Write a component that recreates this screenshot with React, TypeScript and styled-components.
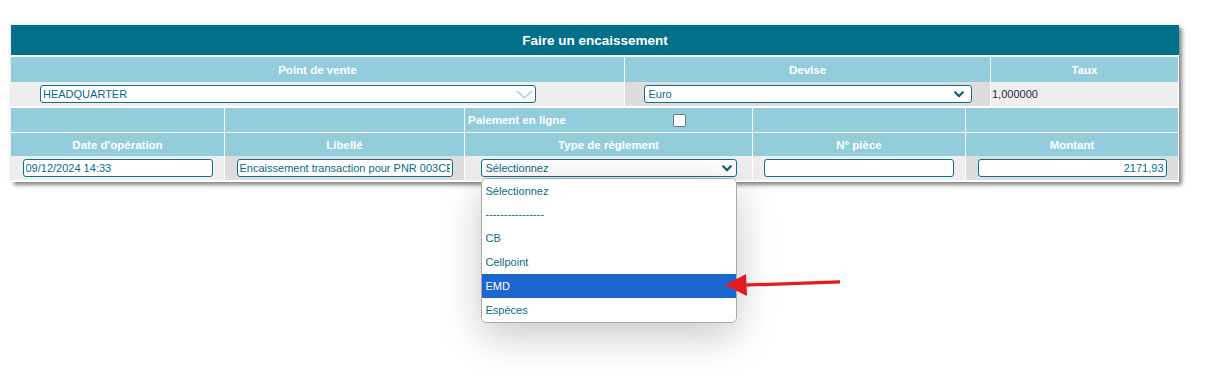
import React from 'react'
import styled, { createGlobalStyle } from 'styled-components'

const GlobalStyle = createGlobalStyle`
  body {
    margin: 0;
    background: #fff;
    font-family: "Liberation Sans", Arial, sans-serif;
  }
`

const Page = styled.div`
  position: relative;
  width: 1229px;
  height: 382px;
  padding: 25px 0 0 11px;
  box-sizing: border-box;
  overflow: hidden;
`

const Card = styled.div`
  width: 1168px;
  background: #fff;
  padding-bottom: 2px;
  box-shadow: 3px 3px 4px rgba(0, 0, 0, 0.45), 0 0 5px rgba(0, 0, 0, 0.12);
`

const Title = styled.div`
  height: 30px;
  margin-bottom: 2px;
  background: #027089;
  color: #fff;
  font: bold 13.5px "Liberation Sans", Arial, sans-serif;
  display: flex;
  align-items: center;
  justify-content: center;
`

const Row = styled.div<{ $cols: string; $top?: number }>`
  display: grid;
  grid-template-columns: ${({ $cols }) => $cols};
  column-gap: 1px;
  margin-right: 1px;
  margin-top: ${({ $top }) => $top ?? 0}px;
`

const Head = styled.div<{ $h: number; $start?: boolean }>`
  height: ${({ $h }) => $h}px;
  background: #93cddb;
  color: #fff;
  font: bold 11.5px "Liberation Sans", Arial, sans-serif;
  display: flex;
  align-items: center;
  justify-content: ${({ $start }) => ($start ? 'flex-start' : 'center')};
`

const Cell = styled.div<{ $dark?: boolean; $pad?: number; $start?: boolean }>`
  height: 24px;
  background: ${({ $dark }) => ($dark ? '#dddddd' : '#eeeeee')};
  display: flex;
  align-items: center;
  justify-content: ${({ $start }) => ($start ? 'flex-start' : 'center')};
  padding-left: ${({ $pad }) => $pad ?? 0}px;
`

const Field = styled.input<{ $w: number; $right?: boolean }>`
  box-sizing: border-box;
  width: ${({ $w }) => $w}px;
  height: 18px;
  margin: 0;
  padding: 0 2px;
  border: 1px solid #0d6f8a;
  border-radius: 3px;
  background: #fff;
  color: #0a6a85;
  font: 11px "Liberation Sans", Arial, sans-serif;
  text-align: ${({ $right }) => ($right ? 'right' : 'left')};
  outline: none;
`

const SelectWrap = styled.div<{ $w: number }>`
  position: relative;
  width: ${({ $w }) => $w}px;
`

const SelectBox = styled.div<{ $pad: number; $arrowRight: number }>`
  box-sizing: border-box;
  height: 18px;
  padding-left: ${({ $pad }) => $pad}px;
  padding-right: ${({ $arrowRight }) => $arrowRight}px;
  border: 1px solid #0d6f8a;
  border-radius: 3px;
  background: #fff;
  color: #0a6a85;
  font: 11px "Liberation Sans", Arial, sans-serif;
  display: flex;
  align-items: center;
  justify-content: space-between;
`

const Rate = styled.span`
  color: #1d2c48;
  font: 11px "Liberation Sans", Arial, sans-serif;
`

const PaymentLabel = styled.span`
  margin-left: 3px;
  flex: 1;
`

const Check = styled.span`
  width: 13px;
  height: 13px;
  box-sizing: border-box;
  margin-right: 66px;
  border: 1px solid #767676;
  border-radius: 2px;
  background: #fff;
`

const Menu = styled.ul`
  position: absolute;
  top: calc(100% + 1px);
  left: 0;
  right: 0;
  z-index: 5;
  margin: 0;
  padding: 0;
  list-style: none;
  background: #fff;
  border: 1px solid #a9a9a9;
  border-radius: 6px;
  overflow: hidden;
  box-shadow: 0 12px 40px rgba(0, 0, 0, 0.22);
`

const Option = styled.li<{ $active?: boolean; $first?: boolean }>`
  height: ${({ $first }) => ($first ? 23 : 24)}px;
  padding-left: 4px;
  display: flex;
  align-items: center;
  font: 11px "Liberation Sans", Arial, sans-serif;
  color: ${({ $active }) => ($active ? '#fff' : '#0a6a85')};
  background: ${({ $active }) => ($active ? '#1b66d1' : '#fff')};
`

const Pointer = styled.svg`
  position: absolute;
  left: 720px;
  top: 265px;
  z-index: 6;
`

function BoldChevron() {
  return (
    <svg width="10" height="7" viewBox="0 0 10 7">
      <path d="M1.2 1.3 L5 5.2 L8.8 1.3" fill="none" stroke="#0b5f78" strokeWidth="2.2" strokeLinecap="round" strokeLinejoin="round" />
    </svg>
  )
}

function LightChevron() {
  return (
    <svg width="17" height="9" viewBox="0 0 17 9">
      <path d="M1 1 L8.5 8 L16 1" fill="none" stroke="#b3dbe6" strokeWidth="1.8" />
    </svg>
  )
}

const options = ['Sélectionnez', '----------------', 'CB', 'Cellpoint', 'EMD', 'Espèces']

const topCols = '613px 365px 1fr'
const bottomCols = '213px 239px 287px 212px 1fr'

export default function App() {
  return (
    <Page>
      <GlobalStyle />
      <Card>
        <Title>Faire un encaissement</Title>

        <Row $cols={topCols}>
          <Head $h={25}>Point de vente</Head>
          <Head $h={25}>Devise</Head>
          <Head $h={25}>Taux</Head>
        </Row>
        <Row $cols={topCols}>
          <Cell $start $pad={29}>
            <SelectWrap $w={496}>
              <SelectBox $pad={2} $arrowRight={2}>
                HEADQUARTER
                <LightChevron />
              </SelectBox>
            </SelectWrap>
          </Cell>
          <Cell $dark>
            <SelectWrap $w={328}>
              <SelectBox $pad={4} $arrowRight={7}>
                Euro
                <BoldChevron />
              </SelectBox>
            </SelectWrap>
          </Cell>
          <Cell $start $pad={1}>
            <Rate>1,000000</Rate>
          </Cell>
        </Row>

        <Row $cols={bottomCols} $top={2}>
          <Head $h={24} />
          <Head $h={24} />
          <Head $h={24} $start>
            <PaymentLabel>Paiement en ligne</PaymentLabel>
            <Check />
          </Head>
          <Head $h={24} />
          <Head $h={24} />
        </Row>
        <Row $cols={bottomCols} $top={1}>
          <Head $h={23}>Date d'opération</Head>
          <Head $h={23}>Libellé</Head>
          <Head $h={23}>Type de règlement</Head>
          <Head $h={23}>N° pièce</Head>
          <Head $h={23}>Montant</Head>
        </Row>
        <Row $cols={bottomCols}>
          <Cell>
            <Field $w={190} defaultValue="09/12/2024 14:33" readOnly />
          </Cell>
          <Cell $dark>
            <Field $w={216} defaultValue="Encaissement transaction pour PNR 003CE" readOnly />
          </Cell>
          <Cell>
            <SelectWrap $w={256}>
              <SelectBox $pad={4} $arrowRight={4}>
                Sélectionnez
                <BoldChevron />
              </SelectBox>
              <Menu>
                {options.map((o, i) => (
                  <Option key={o} $first={i === 0} $active={o === 'EMD'}>
                    {o}
                  </Option>
                ))}
              </Menu>
            </SelectWrap>
          </Cell>
          <Cell>
            <Field $w={190} defaultValue="" readOnly />
          </Cell>
          <Cell $dark>
            <Field $w={189} $right defaultValue="2171,93" readOnly />
          </Cell>
        </Row>
      </Card>

      <Pointer width="130" height="40" viewBox="0 0 130 40">
        <path d="M22 18.6 L120 15.2 L120 18.6 L22 21.8 Z" fill="#e31b1f" />
        <path d="M5 20 L26 9 L27 31 Z" fill="#e31b1f" />
      </Pointer>
    </Page>
  )
}
